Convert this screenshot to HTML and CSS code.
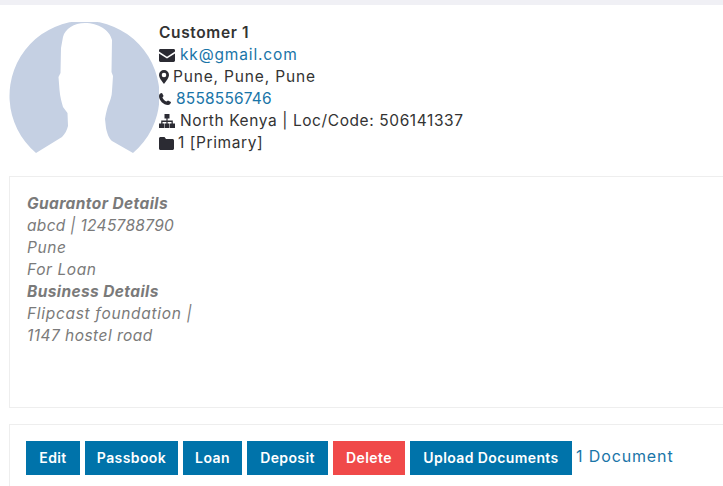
FILE: index.html
```html
<!DOCTYPE html>
<html lang="en">
<head>
<meta charset="utf-8">
<title>Customer 1</title>
<link rel="stylesheet" href="styles.css">
</head>
<body>
<div class="topbar"></div>
<main class="content">
  <section class="profile">
    <svg class="avatar" viewBox="9 22 150 132" aria-hidden="true">
      <path class="avatar-bg" d="M36 153A75 75 0 1 1 133 153L112 141C109 139 107 133 106 128L105 119C106 113 107 109 108 106C110 101 112 96 112 91L113 76 111.500 72 112 40C110 30 98 23 85 23C74 23 65 29 63 37L61 48 60.500 73 58.500 77 59.500 90C60 97 62 103 63 107L67.500 113 68 126C67 130 65 134 62 137Z"/>
    </svg>
    <div class="info">
      <div class="name">Customer 1</div>
      <div class="row">
        <svg class="icon i-env" viewBox="0 0 16 13"><path d="M0 2.600V1.400C0 .6.600 0 1.400 0h13.200c.8 0 1.400.6 1.400 1.400v1.200L8 7.800ZM0 4.400l8 5.200 8-5.200v7.200c0 .8-.6 1.400-1.400 1.400H1.400C.6 13 0 12.400 0 11.600Z"/></svg>
        <a class="link wide" href="#">kk@gmail.com</a>
      </div>
      <div class="row">
        <svg class="icon i-pin" viewBox="0 0 10 14"><path fill-rule="evenodd" d="M5 0a5 5 0 0 1 5 5c0 2.600-3.200 6.800-5 9-1.800-2.200-5-6.400-5-9a5 5 0 0 1 5-5Zm0 2.700a2.300 2.300 0 1 0 0 4.600 2.300 2.300 0 0 0 0-4.600Z"/></svg>
        <span class="wide">Pune, Pune, Pune</span>
      </div>
      <div class="row">
        <svg class="icon i-phone" viewBox="0 0 12 12"><path d="M3 0 4.600 3 3.400 4.500C4 6 6 8 7.500 8.600L9 7.400l3 1.600c0 1.500-1.300 3-3 3C4.500 12 0 7.500 0 3 0 1.300 1.500 0 3 0Z"/></svg>
        <a class="link narrow" href="#">8558556746</a>
      </div>
      <div class="row">
        <svg class="icon i-map" viewBox="0 0 16 14"><path d="M5.500 0h5v4.500H8.600v2h5.200v3H16V14h-5V9.500h1.500V8H8.600v1.500H10.500V14h-5V9.500h1.900V8H3.500v1.500H5V14H0V9.500h2.200v-3h5.200v-2H5.500Z"/></svg>
        <span>North Kenya | Loc/Code: 506141337</span>
      </div>
      <div class="row">
        <svg class="icon i-folder" viewBox="0 0 15 13"><path d="M1.500 0h4L7 2h6.500c.8 0 1.500.7 1.500 1.500v8c0 .8-.7 1.500-1.500 1.500h-12C.7 13 0 12.300 0 11.500v-10C0 .7.700 0 1.500 0Z"/></svg>
        <span>1 [Primary]</span>
      </div>
    </div>
  </section>

  <section class="panel details">
    <div><b>Guarantor Details</b></div>
    <div class="tight">abcd | 1245788790</div>
    <div>Pune</div>
    <div>For Loan</div>
    <div><b>Business Details</b></div>
    <div class="loose">Flipcast foundation |</div>
    <div class="snug">1147 hostel road</div>
  </section>

  <section class="panel actions">
    <a class="btn btn-edit" href="#">Edit</a>
    <a class="btn btn-passbook" href="#">Passbook</a>
    <a class="btn btn-loan" href="#">Loan</a>
    <a class="btn btn-deposit" href="#">Deposit</a>
    <a class="btn btn-danger" href="#">Delete</a>
    <a class="btn btn-upload" href="#">Upload Documents</a>
    <a class="doc-link" href="#">1 Document</a>
  </section>
</main>
</body>
</html>
```

FILE: styles.css
```css
* { box-sizing: border-box; }
html, body { margin: 0; height: 486px; overflow: hidden; background: #fff; }
body {
  font-family: Inter, "Open Sans", sans-serif;
  font-size: 15.500px;
  line-height: 22px;
  letter-spacing: 0.59px;
  color: #333;
}
.topbar { height: 5px; background: #f0f0f5; }
.content { padding: 17px 0 0 9px; }
.profile { display: flex; height: 154px; }
.avatar { width: 150px; height: 132px; flex: none; }
.avatar-bg { fill: #c5d0e3; }
.name { font-weight: 600; letter-spacing: 0.63px; }
.row { display: flex; align-items: center; height: 22px; white-space: nowrap; }
.wide { letter-spacing: 0.84px; }
.narrow { letter-spacing: 0.19px; }
.tight { letter-spacing: 0.31px; }
.snug { letter-spacing: 0.46px; }
.loose { letter-spacing: 0.69px; }
.icon { flex: none; fill: #2b2b33; }
.i-env { width: 16px; height: 13px; margin-right: 5px; }
.i-pin { width: 10px; height: 14px; margin-right: 4px; }
.i-phone { width: 12px; height: 12px; margin-right: 5px; }
.i-map { width: 16px; height: 14px; margin-right: 5px; }
.i-folder { width: 15px; height: 13px; margin-right: 4px; }
.link { color: #1a75a8; text-decoration: none; }
.panel { border: 1px solid #eeeeee; border-right: 0; }
.details {
  height: 232px;
  padding: 16px 17px 15px;
  font-style: italic;
  color: #7a7a7a;
}
.details b { font-weight: 700; letter-spacing: 0.4px; }
.actions {
  display: flex;
  align-items: flex-start;
  margin-top: 16px;
  padding: 16px;
  height: 80px;
  gap: 5px;
}
.btn {
  display: flex;
  align-items: center;
  justify-content: center;
  height: 34px;
  color: #fff;
  background: #0073aa;
  font-size: 14px;
  font-weight: 600;
  letter-spacing: 0.4px;
  text-decoration: none;
  white-space: nowrap;
}
.btn-edit { width: 54px; }
.btn-passbook { width: 93px; }
.btn-loan { width: 59px; }
.btn-deposit { width: 81px; }
.btn-danger { width: 72px; background: #f04949; }
.btn-upload { width: 162px; }
.doc-link {
  margin-left: -1px;
  line-height: 30px;
  font-size: 16px;
  letter-spacing: 0.87px;
  color: #1a75a8;
  text-decoration: none;
  white-space: nowrap;
}
```
